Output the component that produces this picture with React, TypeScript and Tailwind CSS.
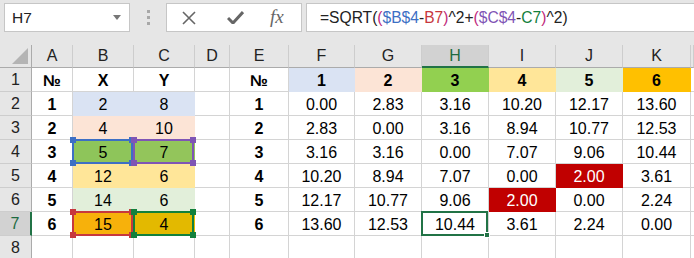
import { ReactNode } from 'react';

type Cell = {
    text: string;
    bg?: string;
    bold?: boolean;
    white?: boolean;
    ref?: string; // colour of a formula reference box
    selected?: boolean;
};

const cols = ['A', 'B', 'C', 'D', 'E', 'F', 'G', 'H', 'I', 'J', 'K'];

const leftRows: [string, string, string, string, string][] = [
    ['1', '2', '8', 'bg-[#dae3f3]', 'bg-[#dae3f3]'],
    ['2', '4', '10', 'bg-[#fce4d6]', 'bg-[#fce4d6]'],
    ['3', '5', '7', 'bg-[#8ec55a]', 'bg-[#93c55b]'],
    ['4', '12', '6', 'bg-[#ffe699]', 'bg-[#ffe699]'],
    ['5', '14', '6', 'bg-[#e2efda]', 'bg-[#e2efda]'],
    ['6', '15', '4', 'bg-[#f7b10b]', 'bg-[#e3b900]'],
];

const matrix = [
    ['0.00', '2.83', '3.16', '10.20', '12.17', '13.60'],
    ['2.83', '0.00', '3.16', '8.94', '10.77', '12.53'],
    ['3.16', '3.16', '0.00', '7.07', '9.06', '10.44'],
    ['10.20', '8.94', '7.07', '0.00', '2.00', '3.61'],
    ['12.17', '10.77', '9.06', '2.00', '0.00', '2.24'],
    ['13.60', '12.53', '10.44', '3.61', '2.24', '0.00'],
];

const topFills = [
    'bg-[#dae3f3]',
    'bg-[#fce4d6]',
    'bg-[#92d050]',
    'bg-[#ffe699]',
    'bg-[#e2efda]',
    'bg-[#ffc000]',
];

function buildRows(): Cell[][] {
    const rows: Cell[][] = [];
    rows.push([
        { text: '№', bold: true },
        { text: 'X', bold: true },
        { text: 'Y', bold: true },
        { text: '' },
        { text: '№', bold: true },
        ...topFills.map((bg, i) => ({ text: String(i + 1), bg, bold: true })),
    ]);
    leftRows.forEach(([n, x, y, bx, by], r) => {
        const refB = r === 2 ? 'blue' : r === 5 ? 'red' : undefined;
        const refC = r === 2 ? 'purple' : r === 5 ? 'green' : undefined;
        rows.push([
            { text: n, bold: true },
            { text: x, bg: bx, ref: refB },
            { text: y, bg: by, ref: refC },
            { text: '' },
            { text: n, bold: true },
            ...matrix[r].map((v, c) => {
                const red = (r === 3 && c === 4) || (r === 4 && c === 3);
                return {
                    text: v,
                    bg: red ? 'bg-[#c00000]' : undefined,
                    white: red,
                    selected: r === 5 && c === 2,
                };
            }),
        ]);
    });
    rows.push(cols.map(() => ({ text: '' })));
    return rows;
}

const refStyles: Record<string, { box: string; dot: string }> = {
    blue: { box: 'border-[#3d6fc4]', dot: 'bg-[#3d6fc4]' },
    purple: { box: 'border-[#7f55b5]', dot: 'bg-[#7f55b5]' },
    red: { box: 'border-[#c7383d]', dot: 'bg-[#c7383d]' },
    green: { box: 'border-[#12803c]', dot: 'bg-[#12803c]' },
};

function RefBox({ color }: { color: string }) {
    const s = refStyles[color];
    return (
        <div className={`pointer-events-none absolute -left-px -top-px z-10 h-[25px] w-[calc(100%+1px)] border-2 ${s.box}`}>
            <span className={`absolute -left-[4px] -top-[4px] h-[6px] w-[6px] ${s.dot}`} />
            <span className={`absolute -right-[4px] -top-[4px] h-[6px] w-[6px] ${s.dot}`} />
            <span className={`absolute -bottom-[4px] -left-[4px] h-[6px] w-[6px] ${s.dot}`} />
            <span className={`absolute -bottom-[4px] -right-[4px] h-[6px] w-[6px] ${s.dot}`} />
        </div>
    );
}

function SheetCell({ cell }: { cell: Cell }) {
    return (
        <div
            className={`relative flex h-[24px] items-center justify-center border-b border-r pt-[2px] text-[16px] ${
                cell.bg ? `${cell.bg} border-transparent` : 'border-[#d4d4d4] bg-white'
            } ${cell.bold ? 'font-bold' : ''} ${cell.white ? 'text-white' : 'text-black'}`}
        >
            {cell.text}
            {cell.ref && <RefBox color={cell.ref} />}
            {cell.selected && (
                <div className="pointer-events-none absolute -left-px -top-px z-10 h-[25px] w-[calc(100%+1px)] border-2 border-[#217346]">
                    <span className="absolute -bottom-[4px] -right-[4px] h-[6px] w-[6px] border border-white bg-[#217346]" />
                </div>
            )}
        </div>
    );
}

function Header({ children, active }: { children?: ReactNode; active?: boolean }) {
    return (
        <div
            className={`flex h-[23px] items-center justify-center border-r border-[#cdcdcd] text-[16px] ${
                active
                    ? 'border-b-2 border-b-[#217346] bg-[#d2d2d2] text-[#1e6b41]'
                    : 'border-b border-b-[#ababab] bg-[#e6e6e6] text-[#222]'
            }`}
        >
            {children}
        </div>
    );
}

function RowHeader({ n, active }: { n: number; active?: boolean }) {
    return (
        <div
            className={`flex h-[24px] items-center justify-center border-b border-[#cdcdcd] pt-[1px] text-[16px] ${
                active
                    ? 'border-r-2 border-r-[#217346] bg-[#d2d2d2] text-[#1e6b41]'
                    : 'border-r border-r-[#ababab] bg-[#e6e6e6] text-[#222]'
            }`}
        >
            {n}
        </div>
    );
}

function FormulaBar() {
    return (
        <div className="flex h-[45px] items-start bg-[#e6e6e6] pt-[3px]">
            <div className="ml-[4px] flex h-[29px] w-[126px] items-center border border-[#c6c6c6] bg-white pl-[7px] pr-[8px] text-[15.5px] text-[#222]">
                <span className="flex-1">H7</span>
                <svg width="8" height="5" viewBox="0 0 8 5">
                    <path d="M0 0h8L4 5z" fill="#777" />
                </svg>
            </div>
            <div className="ml-[17px] mt-[7px] flex flex-col gap-[3px]">
                <span className="h-[3px] w-[3px] bg-[#a8a8a8]" />
                <span className="h-[3px] w-[3px] bg-[#a8a8a8]" />
                <span className="h-[3px] w-[3px] bg-[#a8a8a8]" />
            </div>
            <div className="ml-[16px] flex h-[29px] w-[136px] items-center border border-[#c6c6c6] bg-white">
                <svg className="ml-[15px]" width="14" height="14" viewBox="0 0 14 14">
                    <path d="M1 1L13 13M13 1L1 13" stroke="#666" strokeWidth="1.6" />
                </svg>
                <svg className="ml-[31px]" width="17" height="13" viewBox="0 0 17 13">
                    <path d="M1 7l5 5L16 1" stroke="#666" strokeWidth="3" fill="none" />
                </svg>
                <span className="ml-[26px] font-['Liberation_Serif',serif] text-[19px] italic text-[#666]">
                    fx
                </span>
            </div>
            <div className="ml-[4px] flex h-[29px] flex-1 items-center border border-r-0 border-[#c6c6c6] bg-white pl-[13px] text-[15.6px] text-[#222]">
                <span>=SQRT(</span>
                <span className="text-[#c0287c]">(</span>
                <span className="text-[#3d6fc4]">$B$4</span>
                <span>-</span>
                <span className="text-[#c7383d]">B7</span>
                <span className="text-[#c0287c]">)</span>
                <span>^2+</span>
                <span className="text-[#c0287c]">(</span>
                <span className="text-[#7f55b5]">$C$4</span>
                <span>-</span>
                <span className="text-[#12803c]">C7</span>
                <span className="text-[#c0287c]">)</span>
                <span>^2)</span>
            </div>
        </div>
    );
}

export default function App() {
    const rows = buildRows();
    return (
        <div className="h-[258px] w-[694px] overflow-hidden bg-white font-['Liberation_Sans',sans-serif]">
            <FormulaBar />
            <div className="grid grid-cols-[32px_41px_61px_61px_35px_59px_66px_67px_67px_67px_67px_68px_1fr]">
                <div className="relative h-[23px] border-b border-r border-[#ababab] bg-[#e6e6e6]">
                    <svg className="absolute bottom-[3px] right-[3px]" width="16" height="16" viewBox="0 0 16 16">
                        <path d="M16 0V16H0z" fill="#b4b4b4" />
                    </svg>
                </div>
                {cols.map((c) => (
                    <Header key={c} active={c === 'H'}>
                        {c}
                    </Header>
                ))}
                <Header />
                {rows.map((row, r) => (
                    <div key={r} className="contents">
                        <RowHeader n={r + 1} active={r === 6} />
                        {row.map((cell, c) => (
                            <SheetCell key={c} cell={cell} />
                        ))}
                        <div className="h-[24px] border-b border-[#d4d4d4] bg-white" />
                    </div>
                ))}
            </div>
        </div>
    );
}
